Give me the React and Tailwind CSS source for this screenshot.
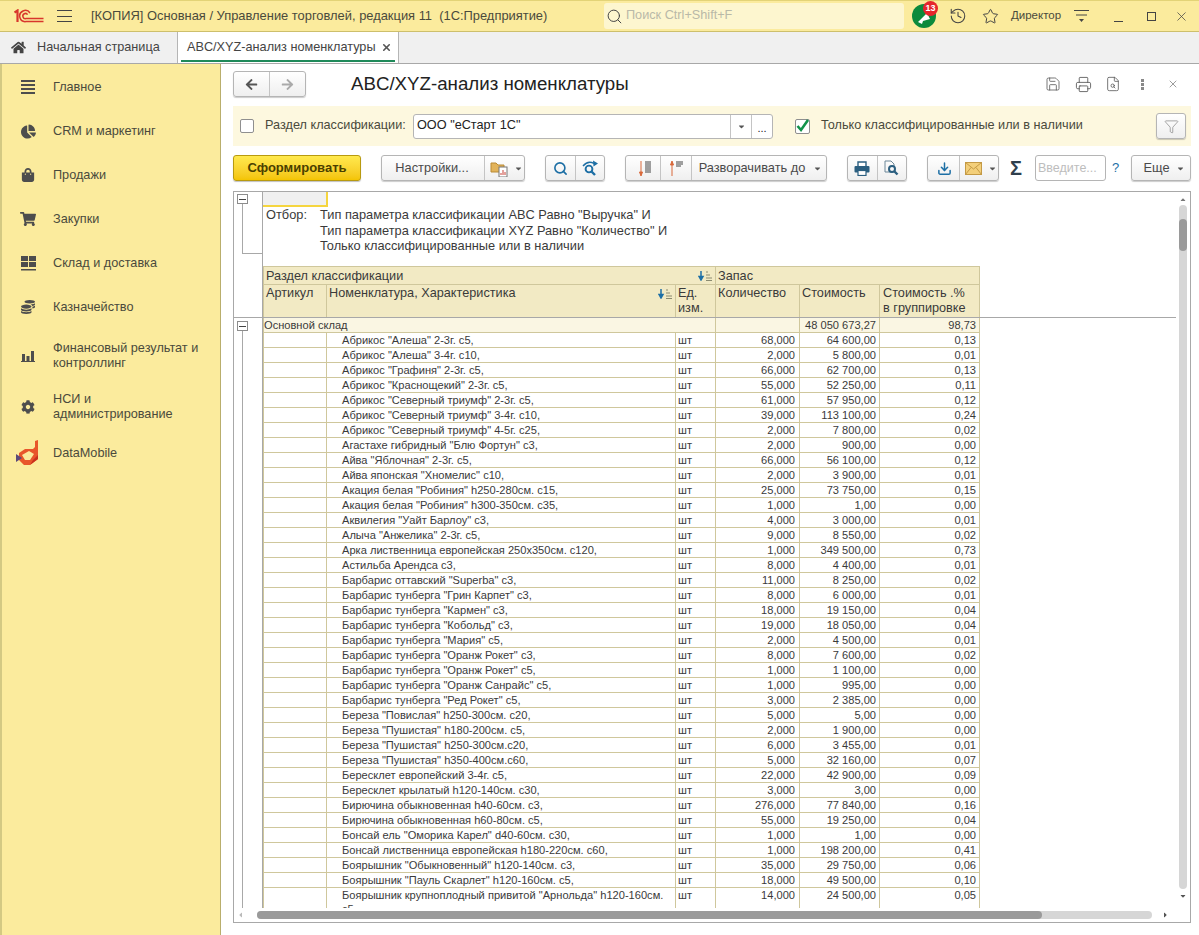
import { FaHome, FaChartPie, FaShoppingBag, FaShoppingCart, FaCog, FaCoins, FaArrowLeft, FaArrowRight, FaCaretDown } from 'react-icons/fa';
import { History, Star, Search, Save, Printer, FileSearch, X, Download, Filter } from 'lucide-react';

const rows = [
  ['Абрикос "Алеша" 2-3г. с5,', '68,000', '64 600,00', '0,13'],
  ['Абрикос "Алеша" 3-4г. с10,', '2,000', '5 800,00', '0,01'],
  ['Абрикос "Графиня" 2-3г. с5,', '66,000', '62 700,00', '0,13'],
  ['Абрикос "Краснощекий" 2-3г. с5,', '55,000', '52 250,00', '0,11'],
  ['Абрикос "Северный триумф" 2-3г. с5,', '61,000', '57 950,00', '0,12'],
  ['Абрикос "Северный триумф" 3-4г. с10,', '39,000', '113 100,00', '0,24'],
  ['Абрикос "Северный триумф" 4-5г. с25,', '2,000', '7 800,00', '0,02'],
  ['Агастахе гибридный "Блю Фортун" с3,', '2,000', '900,00', '0,00'],
  ['Айва "Яблочная" 2-3г. с5,', '66,000', '56 100,00', '0,12'],
  ['Айва японская "Хномелис" с10,', '2,000', '3 900,00', '0,01'],
  ['Акация белая "Робиния" h250-280см. с15,', '25,000', '73 750,00', '0,15'],
  ['Акация белая "Робиния" h300-350см. с35,', '1,000', '1,00', '0,00'],
  ['Аквилегия "Уайт Барлоу" с3,', '4,000', '3 000,00', '0,01'],
  ['Алыча "Анжелика" 2-3г. с5,', '9,000', '8 550,00', '0,02'],
  ['Арка лиственница европейская 250х350см. с120,', '1,000', '349 500,00', '0,73'],
  ['Астильба Арендса с3,', '8,000', '4 400,00', '0,01'],
  ['Барбарис оттавский "Superba" с3,', '11,000', '8 250,00', '0,02'],
  ['Барбарис тунберга "Грин Карпет" с3,', '8,000', '6 000,00', '0,01'],
  ['Барбарис тунберга "Кармен" с3,', '18,000', '19 150,00', '0,04'],
  ['Барбарис тунберга "Кобольд" с3,', '19,000', '18 050,00', '0,04'],
  ['Барбарис тунберга "Мария" с5,', '2,000', '4 500,00', '0,01'],
  ['Барбарис тунберга "Оранж Рокет" с3,', '8,000', '7 600,00', '0,02'],
  ['Барбарис тунберга "Оранж Рокет" с5,', '1,000', '1 100,00', '0,00'],
  ['Барбарис тунберга "Оранж Санрайс" с5,', '1,000', '995,00', '0,00'],
  ['Барбарис тунберга "Ред Рокет" с5,', '3,000', '2 385,00', '0,00'],
  ['Береза "Повислая" h250-300см. с20,', '5,000', '5,00', '0,00'],
  ['Береза "Пушистая" h180-200см. с5,', '2,000', '1 900,00', '0,00'],
  ['Береза "Пушистая" h250-300см.с20,', '6,000', '3 455,00', '0,01'],
  ['Береза "Пушистая" h350-400см.с60,', '5,000', '32 160,00', '0,07'],
  ['Бересклет европейский 3-4г. с5,', '22,000', '42 900,00', '0,09'],
  ['Бересклет крылатый h120-140см. с30,', '3,000', '3,00', '0,00'],
  ['Бирючина обыкновенная h40-60см. с3,', '276,000', '77 840,00', '0,16'],
  ['Бирючина обыкновенная h60-80см. с5,', '55,000', '19 250,00', '0,04'],
  ['Бонсай ель "Оморика Карел" d40-60см. с30,', '1,000', '1,00', '0,00'],
  ['Бонсай лиственница европейская h180-220см. с60,', '1,000', '198 200,00', '0,41'],
  ['Боярышник "Обыкновенный" h120-140см. с3,', '35,000', '29 750,00', '0,06'],
  ['Боярышник "Пауль Скарлет" h120-160см. с5,', '18,000', '49 500,00', '0,10'],
  ['Боярышник крупноплодный привитой "Арнольда" h120-160см. с5', '14,000', '24 500,00', '0,05'],
];

const WarehouseIcon = () => (
  <svg width="15" height="15" viewBox="0 0 15 15" fill="#4d4d4d">
    <rect x="0" y="0" width="7" height="5" />
    <rect x="8" y="0" width="7" height="5" />
    <rect x="0" y="6" width="7" height="5" />
    <rect x="8" y="6" width="7" height="5" />
    <rect x="0" y="13" width="15" height="1.5" />
  </svg>
);

const BarsIcon = () => (
  <svg width="14" height="13" viewBox="0 0 14 13" fill="#4d4d4d">
    <rect x="1" y="5" width="3" height="7" />
    <rect x="5.5" y="7" width="3" height="5" />
    <rect x="10" y="2" width="3" height="10" />
    <rect x="0" y="12" width="14" height="1" />
  </svg>
);

const MainIcon = () => (
  <svg width="14" height="14" viewBox="0 0 14 14" fill="#4d4d4d">
    <rect y="0" width="14" height="2" />
    <rect y="4" width="14" height="2" />
    <rect y="8" width="14" height="2" />
    <rect y="12" width="14" height="2" />
  </svg>
);

const DataMobileIcon = () => (
  <svg width="24" height="26" viewBox="0 0 24 26">
    <path d="M19 1 L22 0 L22 19 L14 25 L8 25 L3 20 L3 13 L9 9 L17 9 L19 7 Z" fill="#e8562a" />
    <path d="M6 15 L13 11 L18 14 L14 20 L9 20 Z" fill="#fbeb9d" />
    <path d="M0 14 L6 18 L0 22 Z" fill="#5b4a7a" />
    <path d="M14 25 L22 19 L22 15 L17 20 Z" fill="#c9301e" />
  </svg>
);

const Logo1C = () => (
  <svg width="30" height="15" viewBox="0 0 30 15" fill="none" stroke="#d8362c">
    <path d="M0.5 3.5 L3.5 1.5 V13" strokeWidth="2.2" />
    <path d="M16 4 A5.6 5.6 0 1 0 12 12.6 H29.5" strokeWidth="1.5" />
    <path d="M13.6 5.6 A2.6 2.6 0 1 0 12 9.6 H29.5" strokeWidth="1.5" />
  </svg>
);

const SortIcon = () => (
  <svg width="15" height="10" viewBox="0 0 15 10">
    <path d="M3 0 V7 M1 5.5 L3 9 L5 5.5 Z" stroke="#1d6fa5" strokeWidth="1.5" fill="#1d6fa5" />
    <path d="M8 1 H10 M8 4 H12 M8 7 H14 M8 9.5 H14" stroke="#8a8a70" strokeWidth="1" />
  </svg>
);

const SortLinesIcon = ({ up }) => (
  <svg width="16" height="17" viewBox="0 0 16 17">
    <path d={up ? 'M4 16 V3 M2.5 5 L4 1 L5.5 5 Z' : 'M4 1 V14 M2.5 12 L4 16 L5.5 12 Z'} stroke="#d9693a" strokeWidth="1" fill="#d9693a" />
    <path d={up ? 'M8 2 H15 M8 4 H15 M8 6 H13' : 'M8 2 H14 M8 4 H14 M8 6 H14 M8 8 H14 M8 10 H14 M8 12 H14'} stroke="#444" strokeWidth="1" />
  </svg>
);

const PrintIcon = () => (
  <svg width="16" height="15" viewBox="0 0 16 15">
    <path d="M4 5 V1 H12 V5" fill="#fff" stroke="#2b5f80" strokeWidth="1.4" />
    <rect x="0.5" y="5" width="15" height="6.5" rx="1" fill="#2b5f80" />
    <rect x="4" y="9.5" width="8" height="5" fill="#fff" stroke="#2b5f80" strokeWidth="1.2" />
  </svg>
);

const PreviewIcon = () => (
  <svg width="15" height="16" viewBox="0 0 15 16" fill="none">
    <path d="M9 12 H1 V1 H7 L10 4 V6" stroke="#6d8798" strokeWidth="1" />
    <circle cx="8" cy="9" r="3" stroke="#2b5f80" strokeWidth="2" />
    <path d="M10 11 L13.5 14.5" stroke="#2b5f80" strokeWidth="2.4" />
  </svg>
);

const RefreshSearchIcon = () => (
  <svg width="18" height="17" viewBox="0 0 18 17" fill="none" stroke="#1d6fa5">
    <circle cx="8" cy="9" r="3.4" strokeWidth="1.9" />
    <path d="M10.5 11.5 L14 15" strokeWidth="2.4" />
    <path d="M2 6 Q7 0 13 3.5" strokeWidth="1.4" />
    <path d="M12 0.5 L17 3.5 L12.5 6.5 Z" fill="#1d6fa5" strokeWidth="0" />
  </svg>
);

const MailIcon = () => (
  <svg width="17" height="13" viewBox="0 0 17 13">
    <rect x="0.5" y="0.5" width="16" height="12" fill="#f3cf7a" stroke="#c49a45" />
    <path d="M0.5 0.5 L8.5 7 L16.5 0.5 M0.5 12.5 L6 5.5 M16.5 12.5 L11 5.5" fill="none" stroke="#c49a45" />
  </svg>
);

const ExpandBox = () => (
  <div className="flex h-[10px] w-[11px] items-center justify-center border border-[#8c8c8c] bg-white">
    <div className="h-px w-[7px] bg-[#444]" />
  </div>
);

const menu = [
  { label: 'Главное', h: 'h-[44px]', icon: <MainIcon /> },
  { label: 'CRM и маркетинг', h: 'h-[44px]', icon: <FaChartPie size={15} color="#4d4d4d" /> },
  { label: 'Продажи', h: 'h-[44px]', icon: <FaShoppingBag size={14} color="#4d4d4d" /> },
  { label: 'Закупки', h: 'h-[44px]', icon: <FaShoppingCart size={16} color="#4d4d4d" /> },
  { label: 'Склад и доставка', h: 'h-[44px]', icon: <WarehouseIcon /> },
  { label: 'Казначейство', h: 'h-[44px]', icon: <FaCoins size={14} color="#4d4d4d" /> },
  { label: 'Финансовый результат и контроллинг', h: 'h-[53px]', icon: <BarsIcon /> },
  { label: 'НСИ и администрирование', h: 'h-[49px]', icon: <FaCog size={14} color="#4d4d4d" /> },
  { label: 'DataMobile', h: 'h-[44px]', icon: <DataMobileIcon /> },
];

const btn = 'flex h-[26px] items-center justify-center rounded-[3px] border border-[#b5b5b5] bg-linear-to-b from-white to-[#efefef] shadow-[0_1px_1px_rgba(0,0,0,0.2)] text-[12.8px] text-[#4a4a4a]';
const divider = 'h-full w-px shrink-0 bg-[#c4c4c4]';
const cellBorder = 'border border-[#cfc79c]';

function Sidebar() {
  return (
    <aside className="w-[221px] shrink-0 border-l-2 border-r border-[#d3c983] border-r-[#b9ae6c] bg-[#fbeb9d] pt-[1px]">
      {menu.map((item) => (
        <div key={item.label} className={`flex items-center ${item.h}`}>
          <div className="flex w-[51px] shrink-0 justify-center pl-[1px]">{item.icon}</div>
          <div className="w-[155px] text-[12.7px] leading-[15px] text-[#4a4a3c]">{item.label}</div>
        </div>
      ))}
    </aside>
  );
}

function TitleBar() {
  return (
    <header className="flex h-[32px] items-center border-y border-t-[#e3d377] border-b-[#cdbf6c] bg-[#fbeb9d] text-[#4a4a3c]">
      <div className="ml-[14px] w-[30px]"><Logo1C /></div>
      <div className="ml-[13px] flex h-[12px] w-[15px] flex-col justify-between">
        <div className="h-px bg-[#444]" /><div className="h-px bg-[#444]" /><div className="h-px bg-[#444]" />
      </div>
      <div className="ml-[19px] w-[513px] whitespace-pre text-[12.9px]">[КОПИЯ] Основная / Управление торговлей, редакция 11  (1С:Предприятие)</div>
      <div className="flex h-[26px] w-[300px] items-center rounded-[3px] bg-[#fdf6cf] pl-[2px] text-[12.7px] text-[#b9b9a8]">
        <Search size={17} color="#444" strokeWidth={1.4} />
        <span className="ml-[3px]">Поиск Ctrl+Shift+F</span>
      </div>
      <div className="relative ml-[8px] h-[24px] w-[24px] rounded-full bg-[#0c8a3c]">
        <svg width="24" height="24" viewBox="0 0 24 24" className="absolute"><path d="M6 18 L15 9 L18 15 L11 17 L10 20 Z" fill="#fff" /></svg>
        <div className="absolute -right-[2px] -top-[3px] flex h-[15px] w-[15px] items-center justify-center rounded-full bg-[#e5262c] text-[9px] font-bold text-white">13</div>
      </div>
      <History size={18} color="#444" strokeWidth={1.4} className="ml-[13px]" />
      <Star size={17} color="#444" strokeWidth={1.4} className="ml-[15px]" />
      <div className="ml-[12px] w-[51px] text-[11.5px]">Директор</div>
      <svg width="16" height="14" viewBox="0 0 16 14" className="ml-[12px]" stroke="#444" fill="#444">
        <path d="M0 1.5 H15 M2 6 H13" strokeWidth="1" /><path d="M5 10 H10 L7.5 13 Z" strokeWidth="0" />
      </svg>
      <div className="ml-[24px] mt-[10px] h-px w-[9px] bg-[#444]" />
      <div className="ml-[24px] h-[9px] w-[9px] border border-[#444]" />
      <X size={15} color="#444" strokeWidth={1.2} className="ml-[18px]" />
    </header>
  );
}

function Tabs() {
  return (
    <nav className="flex h-[32px] items-stretch border-b border-[#a8a8a8] bg-[#f0f0f0] text-[12.7px] text-[#444]">
      <div className="flex w-[177px] items-center pl-[11px]">
        <FaHome size={15} color="#444" />
        <span className="ml-[11px]">Начальная страница</span>
      </div>
      <div className="relative flex w-[222px] items-center border-x border-[#b5b5b5] bg-white pl-[9px]">
        ABC/XYZ-анализ номенклатуры
        <X size={11} strokeWidth={3.5} color="#555" className="ml-[5px]" />
        <div className="absolute bottom-[1px] left-[3px] right-[3px] h-[2px] bg-[#1f8a5a]" />
      </div>
    </nav>
  );
}

function FormHeader() {
  return (
    <div className="flex h-[42px] items-center pb-[2px]">
      <div className={`${btn} h-[24px] w-[73px]`}>
        <div className="flex flex-1 justify-center"><FaArrowLeft size={13} color="#555" /></div>
        <div className={divider} />
        <div className="flex flex-1 justify-center"><FaArrowRight size={13} color="#aaa" /></div>
      </div>
      <h1 className="ml-[45px] w-[692px] text-[18.7px] text-[#222]">ABC/XYZ-анализ номенклатуры</h1>
      <Save size={16} strokeWidth={1.2} color="#555" className="ml-[2px]" />
      <Printer size={17} strokeWidth={1.2} color="#555" className="ml-[14px]" />
      <FileSearch size={16} strokeWidth={1.2} color="#555" className="ml-[13px]" />
      <div className="ml-[20px] flex h-[11px] flex-col justify-between">
        <div className="h-[3px] w-[3px] bg-[#888]" /><div className="h-[3px] w-[3px] bg-[#888]" /><div className="h-[3px] w-[3px] bg-[#888]" />
      </div>
      <X size={12} strokeWidth={1.3} color="#666" className="ml-[23px]" />
    </div>
  );
}

function FilterBand() {
  return (
    <div className="flex h-[40px] w-[958px] items-center bg-[#fdf8df] pl-[7px] text-[12.7px] text-[#4a4a3c]">
      <div className="h-[14px] w-[14px] rounded-[2px] border border-[#8f8f8f] bg-white" />
      <div className="ml-[11px] w-[148px]">Раздел классификации:</div>
      <div className="flex h-[25px] w-[360px] items-center rounded-[3px] border border-[#b5b5b5] bg-white text-[#222]">
        <div className="flex-1 pl-[3px]">ООО "еСтарт 1С"</div>
        <div className="flex h-full w-[21px] items-center justify-center border-l border-[#c4c4c4]"><FaCaretDown size={9} color="#555" /></div>
        <div className="h-full w-[21px] border-l border-[#c4c4c4] text-center text-[11px] leading-[26px]">...</div>
      </div>
      <div className="ml-[22px] flex h-[15px] w-[15px] items-center justify-center rounded-[2px] border border-[#8f8f8f] bg-white">
        <svg width="15" height="15" viewBox="0 0 15 15" className="overflow-visible"><path d="M2.5 7 L6 11 L13 1" stroke="#11924a" strokeWidth="2.6" fill="none" /></svg>
      </div>
      <div className="ml-[11px] w-[335px]">Только классифицированные или в наличии</div>
      <div className={`${btn} h-[25px] w-[30px]`}><Filter size={15} strokeWidth={1.2} color="#8a8a8a" /></div>
    </div>
  );
}

function Toolbar() {
  return (
    <div className="flex h-[26px] items-stretch mt-[9px]">
      <div className="flex w-[128px] items-center justify-center rounded-[3px] border border-[#b89a10] bg-linear-to-b from-[#ffe94d] to-[#f4c400] text-[13px] font-bold text-[#4a3f00] shadow-[0_1px_1px_rgba(0,0,0,0.25)]">Сформировать</div>
      <div className={`${btn} ml-[20px] w-[144px]`}>
        <span className="w-[100px] pr-[3px] text-center">Настройки...</span>
        <div className={divider} />
        <svg width="18" height="18" viewBox="0 0 18 18" className="ml-[5px]"><path d="M1 4 H6 L8 6 H14 V13 H1 Z" fill="#e2b35a" stroke="#b98a35" /><rect x="9" y="8" width="8" height="10" fill="#fff" stroke="#777" /><path d="M11 16 V14 M13 16 V11 M15 16 V13" stroke="#c9443a" /></svg>
        <FaCaretDown size={9} color="#555" className="ml-[6px]" />
      </div>
      <div className={`${btn} ml-[20px] w-[60px]`}>
        <div className="flex flex-1 justify-center"><Search size={15} strokeWidth={2.6} color="#1d6fa5" /></div>
        <div className={divider} />
        <div className="flex flex-1 justify-center"><RefreshSearchIcon /></div>
      </div>
      <div className={`${btn} ml-[20px] w-[202px]`}>
        <div className="flex w-[30px] justify-center"><SortLinesIcon /></div>
        <div className={divider} />
        <div className="flex w-[30px] justify-center"><SortLinesIcon up /></div>
        <div className={divider} />
        <span className="ml-[7px]">Разворачивать до</span>
        <FaCaretDown size={9} color="#555" className="ml-[8px]" />
      </div>
      <div className={`${btn} ml-[20px] w-[60px]`}>
        <div className="flex flex-1 justify-center"><PrintIcon /></div>
        <div className={divider} />
        <div className="flex flex-1 justify-center"><PreviewIcon /></div>
      </div>
      <div className={`${btn} ml-[20px] w-[72px]`}>
        <div className="flex w-[30px] justify-center"><Download size={15} strokeWidth={2.4} color="#1d6fa5" /></div>
        <div className={divider} />
        <span className="ml-[5px]"><MailIcon /></span>
        <FaCaretDown size={9} color="#555" className="ml-[6px]" />
      </div>
      <div className="ml-[8px] flex w-[18px] items-center justify-center text-[20px] font-bold text-[#2f3f4c]">Σ</div>
      <div className="ml-[10px] flex w-[71px] items-center rounded-[3px] border border-[#b5b5b5] pl-[2px] text-[12.5px] text-[#bdbdbd]">Введите...</div>
      <div className="ml-[6px] flex w-[9px] items-center text-[13px] text-[#1d6fa5]">?</div>
      <div className={`${btn} ml-[10px] w-[60px] pl-[6px]`}>
        Еще
        <FaCaretDown size={9} color="#555" className="ml-[6px]" />
      </div>
    </div>
  );
}

function ReportTable() {
  return (
    <table className="w-[716px] table-fixed border-collapse text-[#3a3a3a]">
      <colgroup>
        <col className="w-[63px]" />
        <col className="w-[349px]" />
        <col className="w-[40px]" />
        <col className="w-[84px]" />
        <col className="w-[80px]" />
        <col className="w-[100px]" />
      </colgroup>
      <thead className="bg-[#f2eac4] text-[12.7px] font-normal">
        <tr className="h-[18px] leading-[16px]">
          <th colSpan={3} className={`${cellBorder} px-[2px] py-0 text-left font-normal`}>
            <div className="flex items-center justify-between">
              <span>Раздел классификации</span>
              <SortIcon />
            </div>
          </th>
          <th colSpan={3} className={`${cellBorder} px-[2px] py-0 text-left font-normal`}>Запас</th>
        </tr>
        <tr className="h-[33px] align-top leading-[15px]">
          <th className={`${cellBorder} px-[2px] py-0 pt-[1px] text-left font-normal`}>Артикул</th>
          <th className={`${cellBorder} px-[2px] py-0 pt-[1px] text-left font-normal`}>
            <div className="flex items-start justify-between">
              <span>Номенклатура, Характеристика</span>
              <span className="mt-[3px]"><SortIcon /></span>
            </div>
          </th>
          <th className={`${cellBorder} px-[2px] py-0 pt-[1px] text-left font-normal`}>Ед. изм.</th>
          <th className={`${cellBorder} px-[2px] py-0 pt-[1px] text-left font-normal`}>Количество</th>
          <th className={`${cellBorder} px-[2px] py-0 pt-[1px] text-left font-normal`}>Стоимость</th>
          <th className={`${cellBorder} px-[3px] py-0 pt-[1px] text-left font-normal`}>Стоимость .%<br />в группировке</th>
        </tr>
      </thead>
      <tbody className="text-[11.1px] leading-[14px]">
        <tr className="h-[15px] bg-[#faf6e3]">
          <td colSpan={3} className={`${cellBorder} px-0 py-0`}>Основной склад</td>
          <td className={cellBorder} />
          <td className={`${cellBorder} px-[3px] py-0 text-right`}>48 050 673,27</td>
          <td className={`${cellBorder} px-[3px] py-0 text-right`}>98,73</td>
        </tr>
        {rows.map((row) => (
          <tr key={row[0]} className="h-[15px] align-top">
            <td className={cellBorder} />
            <td className={`${cellBorder} py-0 pl-[15px] pr-[3px]`}>{row[0]}</td>
            <td className={`${cellBorder} px-[2px] py-0`}>шт</td>
            <td className={`${cellBorder} py-0 pl-[3px] pr-[4px] text-right`}>{row[1]}</td>
            <td className={`${cellBorder} px-[3px] py-0 text-right`}>{row[2]}</td>
            <td className={`${cellBorder} px-[3px] py-0 text-right`}>{row[3]}</td>
          </tr>
        ))}
      </tbody>
    </table>
  );
}

function ReportFrame() {
  return (
    <div className="mt-[10px] flex h-[732px] w-[958px] flex-col border border-[#a8a8a8]">
      <div className="relative flex min-h-0 flex-1">
        {/* tree gutter */}
        <div className="relative w-[29px] shrink-0 border-r border-[#a8a8a8]">
          <div className="absolute left-[3px] top-[2px]"><ExpandBox /></div>
          <div className="absolute left-[8px] top-[12px] h-[50px] w-[20px] border-b border-l border-[#a8a8a8]" />
          <div className="absolute left-[3px] top-[129px]"><ExpandBox /></div>
          <div className="absolute bottom-0 left-[8px] top-[139px] w-px bg-[#a8a8a8]" />
        </div>
        <div className="min-w-0 flex-1 overflow-hidden">
          <div className="h-[15px] w-[65px] border-b-2 border-r-2 border-[#f5d53f] bg-[#f0f0f0]" />
          <div className="flex h-[59px] pl-[3px] text-[12.8px] leading-[15.5px] text-[#3a3a3a]">
            <div className="w-[54px]">Отбор:</div>
            <div>
              Тип параметра классификации ABC Равно "Выручка" И<br />
              Тип параметра классификации XYZ Равно "Количество" И<br />
              Только классифицированные или в наличии
            </div>
          </div>
          <ReportTable />
        </div>
        {/* vertical scrollbar */}
        <div className="flex w-[14px] shrink-0 flex-col items-center py-[4px]">
          <FaCaretDown size={8} color="#777" className="rotate-180" />
          <div className="mt-[1px] h-[684px] w-[8px] rounded-[4px] bg-[#d6d6d6]">
            <div className="mt-[14px] h-[32px] w-[8px] rounded-[4px] bg-[#9a9a9a]" />
          </div>
          <FaCaretDown size={8} color="#555" className="mt-[3px]" />
        </div>
        {/* line under the report header */}
        <div className="absolute left-0 right-[14px] top-[125px] h-px bg-[#a8a8a8]" />
      </div>
      <div className="flex h-[14px] shrink-0 items-center pl-[3px]">
        <FaCaretDown size={8} color="#bbb" className="rotate-90" />
        <div className="ml-[12px] h-[8px] w-[895px] rounded-[4px] bg-[#d6d6d6]">
          <div className="h-[8px] w-[785px] rounded-[4px] bg-[#9a9a9a]" />
        </div>
        <FaCaretDown size={8} color="#555" className="ml-[9px] -rotate-90" />
      </div>
    </div>
  );
}

export default function App() {
  return (
    <div className="flex h-[935px] w-[1199px] flex-col overflow-hidden bg-white font-['Liberation_Sans',Arial,sans-serif]">
      <TitleBar />
      <Tabs />
      <div className="flex min-h-0 flex-1">
        <Sidebar />
        <main className="min-w-0 flex-1 pl-[12px]">
          <FormHeader />
          <FilterBand />
          <Toolbar />
          <ReportFrame />
        </main>
      </div>
    </div>
  );
}
